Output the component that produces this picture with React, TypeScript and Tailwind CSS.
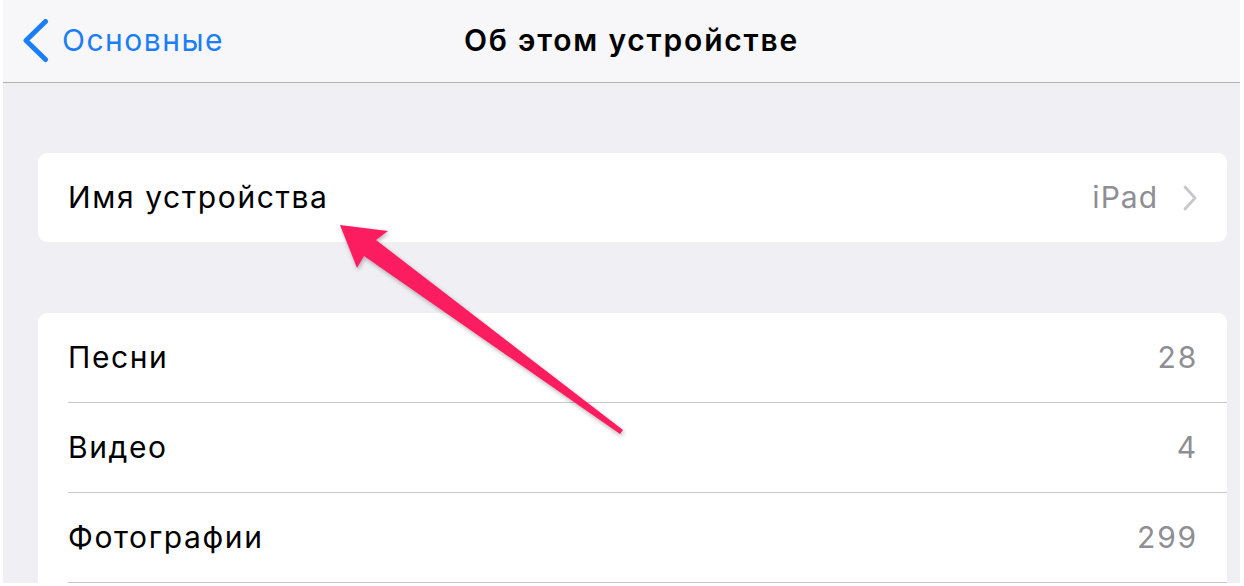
import React from "react";

const font = { fontFamily: "Inter, 'Noto Sans', 'DejaVu Sans', sans-serif" };

function Row({ label, value }: { label: string; value: string }) {
  return (
    <div className="pl-[30px]">
      <div className="h-[90px] flex items-center justify-between pr-[29px] border-b border-[#c8c7cc]">
        <span className="text-[30px] text-black tracking-[1.6px]">{label}</span>
        <span className="text-[30px] text-[#8e8e93] tracking-[1.8px]">{value}</span>
      </div>
    </div>
  );
}

export default function App() {
  return (
    <div className="w-[1244px] h-[586px] bg-white pl-[3px] pr-[4px] pb-[3px] overflow-hidden relative" style={font}>
      <div className="h-full bg-[#efeff4] flex flex-col overflow-hidden">
        <div className="h-[83px] shrink-0 bg-[#f7f7f9] border-b border-[#b2b2b2] relative flex items-center">
          <div className="flex items-center pl-[19px] gap-[10px] text-[#1b7ef6]">
            <svg width="30" height="44" viewBox="0 0 30 44">
              <path d="M23.5 2.5 L4 21.5 L23.5 40.5" fill="none" stroke="#1b7ef6" strokeWidth="5" strokeLinecap="round" strokeLinejoin="round" />
            </svg>
            <span className="text-[30px] leading-none -mt-[2px] tracking-[1.5px]">Основные</span>
          </div>
          <div className="absolute inset-0 flex items-center justify-center pl-[20px]">
            <span className="text-[30px] font-semibold text-black leading-none -mt-[2px] tracking-[1.8px]">Об этом устройстве</span>
          </div>
        </div>

        <div className="mt-[70px] ml-[35px] mr-[13px] bg-white rounded-[9px] h-[89px] flex items-center justify-between pl-[30px] pr-[30px]">
          <span className="text-[30px] text-black tracking-[1.6px]">Имя устройства</span>
          <div className="flex items-center gap-[25px]">
            <span className="text-[30px] text-[#8e8e93] tracking-[1px]">iPad</span>
            <svg width="14" height="26" viewBox="0 0 14 26">
              <path d="M2 2 L12 13 L2 24" fill="none" stroke="#c7c7cc" strokeWidth="2.8" strokeLinecap="round" strokeLinejoin="round" />
            </svg>
          </div>
        </div>

        <div className="mt-[71px] ml-[35px] mr-[13px] bg-white rounded-t-[9px]">
          <Row label="Песни" value="28" />
          <Row label="Видео" value="4" />
          <Row label="Фотографии" value="299" />
        </div>
      </div>

      <svg className="absolute left-0 top-0 pointer-events-none" width="1244" height="586" viewBox="0 0 1244 586">
        <defs>
          <filter id="sh" x="-10%" y="-10%" width="130%" height="130%">
            <feDropShadow dx="1" dy="2" stdDeviation="2" floodColor="#000" floodOpacity="0.3" />
          </filter>
        </defs>
        <polygon
          points="340,225 388,231 376,240 623,430 620,434 364,256 357,268"
          fill="#fc1d60"
          filter="url(#sh)"
        />
      </svg>
    </div>
  );
}
